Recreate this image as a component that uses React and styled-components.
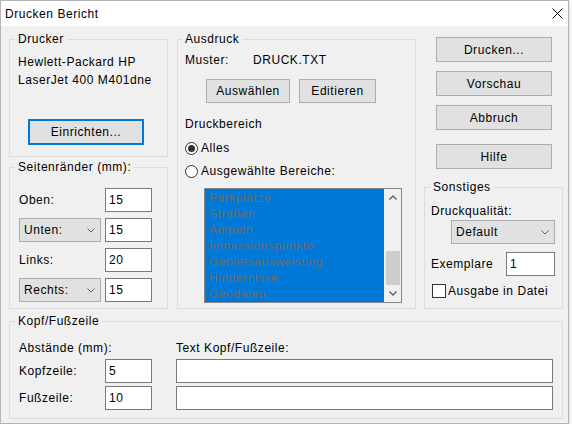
import React from 'react';
import styled, { createGlobalStyle } from 'styled-components';

const Global = createGlobalStyle`
  html, body { margin: 0; padding: 0; background: #ffffff; }
  body {
    font-family: "Liberation Sans", Arial, sans-serif;
    font-size: 12px;
    letter-spacing: 0.55px;
    color: #000;
  }
  * { box-sizing: border-box; }
`;

const Window = styled.div`
  width: 569px;
  height: 424px;
  border: 1px solid #b4b4b4;
  background: #f0f0f0;
  display: flex;
  flex-direction: column;
  box-shadow: 1px 1px 2px rgba(0, 0, 0, 0.16);
`;

const TitleBar = styled.div`
  height: 25px;
  flex-shrink: 0;
  background: #ffffff;
  display: flex;
  align-items: center;
  justify-content: space-between;
  padding: 0 5px 0 4px;
`;

const Body = styled.div`
  flex: 1;
  padding: 5px 5px 0 8px;
  display: flex;
  flex-direction: column;
`;

const TopRow = styled.div`
  display: flex;
  align-items: flex-start;
`;

const Column = styled.div`
  width: ${(p) => p.$w}px;
  margin-right: ${(p) => p.$mr || 0}px;
  display: flex;
  flex-direction: column;
  align-items: flex-start;
  flex-shrink: 0;
`;

const Group = styled.fieldset`
  margin: ${(p) => p.$mt || 0}px 0 0 0;
  min-width: 0;
  width: ${(p) => (p.$w ? `${p.$w}px` : '100%')};
  height: ${(p) => p.$h}px;
  border: 1px solid #dcdcdc;
  padding: 0 ${(p) => p.$px ?? 8}px 0;
  display: flex;
  flex-direction: column;
  align-items: flex-start;
`;

const Legend = styled.legend`
  padding: 0 3px;
  margin-left: ${(p) => p.$ml ?? -3}px;
  line-height: 16px;
  font-size: 12px;
`;

const Text = styled.div`
  line-height: ${(p) => p.$lh || 16}px;
  margin: ${(p) => p.$mt || 0}px 0 0 ${(p) => p.$ml || 0}px;
  white-space: nowrap;
`;

const Button = styled.button`
  font: inherit;
  letter-spacing: inherit;
  color: #000;
  width: ${(p) => p.$w}px;
  height: ${(p) => p.$h || 25}px;
  margin: ${(p) => p.$mt || 0}px 0 0 ${(p) => p.$ml || 0}px;
  padding: 0;
  background: #e1e1e1;
  border: 1px solid ${(p) => (p.$focus ? '#0078d7' : '#adadad')};
  box-shadow: ${(p) => (p.$focus ? 'inset 0 0 0 1px #0078d7' : 'none')};
  flex-shrink: 0;
`;

const TextBox = styled.input`
  font: inherit;
  letter-spacing: inherit;
  color: #000;
  width: ${(p) => (p.$w ? `${p.$w}px` : '100%')};
  height: ${(p) => p.$h || 24}px;
  border: 1px solid #7a7a7a;
  background: #ffffff;
  padding: 0 3px;
  margin: 0;
  outline: none;
`;

const Combo = styled.div`
  width: ${(p) => p.$w}px;
  height: 24px;
  margin: ${(p) => p.$mt || 0}px 0 0 ${(p) => p.$ml || 0}px;
  background: #e1e1e1;
  border: 1px solid #adadad;
  display: flex;
  align-items: center;
  justify-content: space-between;
  padding: 0 5px 0 4px;
`;

const Chevron = ({ up, bold }) => (
  <svg width="8" height="5" viewBox="0 0 8 5">
    <polyline
      points={up ? '0.5,4.5 4,1 7.5,4.5' : '0.5,0.5 4,4 7.5,0.5'}
      fill="none"
      stroke="#606060"
      strokeWidth={bold ? 1.4 : 1}
    />
  </svg>
);

const CloseIcon = () => (
  <svg width="11" height="11" viewBox="0 0 11 11">
    <path d="M0.5 0.5 L10.5 10.5 M10.5 0.5 L0.5 10.5" stroke="#000" strokeWidth="1" fill="none" />
  </svg>
);

const MarginGrid = styled.div`
  display: grid;
  grid-template-columns: 86px 47px;
  grid-auto-rows: 24px;
  row-gap: 6px;
  align-items: center;
  margin: 13px 0 0 1px;
`;

const Row = styled.div`
  display: flex;
  align-items: center;
  margin: ${(p) => p.$mt || 0}px 0 0 ${(p) => p.$ml || 0}px;
  gap: ${(p) => p.$gap || 0}px;
`;

const FixedLabel = styled.div`
  width: ${(p) => p.$w}px;
  line-height: 16px;
  flex-shrink: 0;
`;

const RadioRow = styled.label`
  display: flex;
  align-items: center;
  height: 16px;
  margin-top: ${(p) => p.$mt || 0}px;
  gap: 3px;
`;

const RadioCircle = styled.span`
  width: 13px;
  height: 13px;
  border-radius: 50%;
  border: 1px solid #333333;
  background: #ffffff;
  display: flex;
  align-items: center;
  justify-content: center;
  &::after {
    content: '';
    width: 7px;
    height: 7px;
    border-radius: 50%;
    background: ${(p) => (p.$on ? '#333333' : 'transparent')};
  }
`;

const ListBox = styled.div`
  width: 198px;
  height: 115px;
  margin: 9px 0 0 19px;
  border: 1px solid #828790;
  display: flex;
`;

const ListItems = styled.div`
  flex: 1;
  background: #0078d7;
  padding: 1px 0 0 4px;
  overflow: hidden;
`;

const ListItem = styled.div`
  line-height: 16px;
  color: #6d6d6d;
  white-space: nowrap;
`;

const ScrollBar = styled.div`
  width: 17px;
  background: #f0f0f0;
  display: flex;
  flex-direction: column;
`;

const ScrollArrow = styled.div`
  height: 17px;
  display: flex;
  align-items: center;
  justify-content: center;
`;

const ScrollTrack = styled.div`
  flex: 1;
  display: flex;
  flex-direction: column;
  justify-content: flex-end;
`;

const ScrollThumb = styled.div`
  height: 34px;
  margin: 0 1px 0 2px;
  background: #cdcdcd;
`;

const CheckBox = styled.span`
  width: 14px;
  height: 14px;
  border: 1px solid #333333;
  background: #ffffff;
  margin-left: 1px;
`;

const HeaderGrid = styled.div`
  display: grid;
  grid-template-columns: 86px 47px 401px;
  grid-template-rows: 16px 24px 24px;
  row-gap: 3px;
  align-items: center;
  margin: 11px 0 0 1px;
`;

const GridText = styled.div`
  line-height: 16px;
  white-space: nowrap;
  grid-column: ${(p) => p.$col || 'auto'};
  padding-left: ${(p) => p.$pl || 0}px;
`;

const FooterInput = styled.div`
  display: flex;
  grid-column: 3;
  padding-left: 24px;
`;

const items = [
  'Parkplätze',
  'Straßen',
  'Ampeln',
  'Immissionspunkte',
  'Gebietsausweisung',
  'Hindernisse',
  'Geodaten',
];

export default function App() {
  return (
    <>
      <Global />
      <Window>
        <TitleBar>
          <span>Drucken Bericht</span>
          <CloseIcon />
        </TitleBar>
        <Body>
          <TopRow>
            <Column $w={159} $mr={9}>
              <Group $h={126}>
                <Legend>Drucker</Legend>
                <Text $lh={18} $mt={6}>
                  Hewlett-Packard HP
                  <br />
                  LaserJet 400 M401dne
                </Text>
                <Button $w={116} $h={26} $mt={30} $ml={10} $focus>
                  Einrichten...
                </Button>
              </Group>
              <Group $h={150} $mt={2}>
                <Legend>Seitenränder (mm):</Legend>
                <MarginGrid>
                  <span>Oben:</span>
                  <TextBox readOnly value="15" />
                  <Combo $w={82}>
                    <span>Unten:</span>
                    <Chevron />
                  </Combo>
                  <TextBox readOnly value="15" />
                  <span>Links:</span>
                  <TextBox readOnly value="20" />
                  <Combo $w={82}>
                    <span>Rechts:</span>
                    <Chevron />
                  </Combo>
                  <TextBox readOnly value="15" />
                </MarginGrid>
              </Group>
            </Column>

            <Column $w={239} $mr={8}>
              <Group $h={278} $px={7}>
                <Legend>Ausdruck</Legend>
                <Row $mt={5}>
                  <FixedLabel $w={68}>Muster:</FixedLabel>
                  <span>DRUCK.TXT</span>
                </Row>
                <Row $mt={11} $ml={21} $gap={9}>
                  <Button $w={84} $h={24}>Auswählen</Button>
                  <Button $w={77} $h={24}>Editieren</Button>
                </Row>
                <Text $mt={13}>Druckbereich</Text>
                <RadioRow $mt={8}>
                  <RadioCircle $on />
                  <span>Alles</span>
                </RadioRow>
                <RadioRow $mt={7}>
                  <RadioCircle />
                  <span>Ausgewählte Bereiche:</span>
                </RadioRow>
                <ListBox>
                  <ListItems>
                    {items.map((it) => (
                      <ListItem key={it}>{it}</ListItem>
                    ))}
                  </ListItems>
                  <ScrollBar>
                    <ScrollArrow>
                      <Chevron up bold />
                    </ScrollArrow>
                    <ScrollTrack>
                      <ScrollThumb />
                    </ScrollTrack>
                    <ScrollArrow>
                      <Chevron bold />
                    </ScrollArrow>
                  </ScrollBar>
                </ListBox>
              </Group>
            </Column>

            <Column $w={139}>
              <Button $w={116} $mt={6} $ml={12}>Drucken...</Button>
              <Button $w={116} $mt={9} $ml={12}>Vorschau</Button>
              <Button $w={116} $mt={9} $ml={12}>Abbruch</Button>
              <Button $w={116} $mt={14} $ml={12}>Hilfe</Button>
              <Group $h={130} $mt={10} $px={6}>
                <Legend $ml={-1}>Sonstiges</Legend>
                <Text $mt={8}>Druckqualität:</Text>
                <Combo $w={104} $mt={1} $ml={20}>
                  <span>Default</span>
                  <Chevron />
                </Combo>
                <Row $mt={8}>
                  <FixedLabel $w={75}>Exemplare</FixedLabel>
                  <TextBox readOnly value="1" $w={49} />
                </Row>
                <Row $mt={8} $gap={2}>
                  <CheckBox />
                  <span>Ausgabe in Datei</span>
                </Row>
              </Group>
            </Column>
          </TopRow>

          <Group $h={106} $mt={4}>
            <Legend>Kopf/Fußzeile</Legend>
            <HeaderGrid>
              <GridText $col="1 / 3">Abstände (mm):</GridText>
              <GridText $col="3" $pl={24}>Text Kopf/Fußzeile:</GridText>
              <GridText>Kopfzeile:</GridText>
              <TextBox readOnly value="5" />
              <FooterInput>
                <TextBox readOnly value="" />
              </FooterInput>
              <GridText>Fußzeile:</GridText>
              <TextBox readOnly value="10" />
              <FooterInput>
                <TextBox readOnly value="" />
              </FooterInput>
            </HeaderGrid>
          </Group>
        </Body>
      </Window>
    </>
  );
}
